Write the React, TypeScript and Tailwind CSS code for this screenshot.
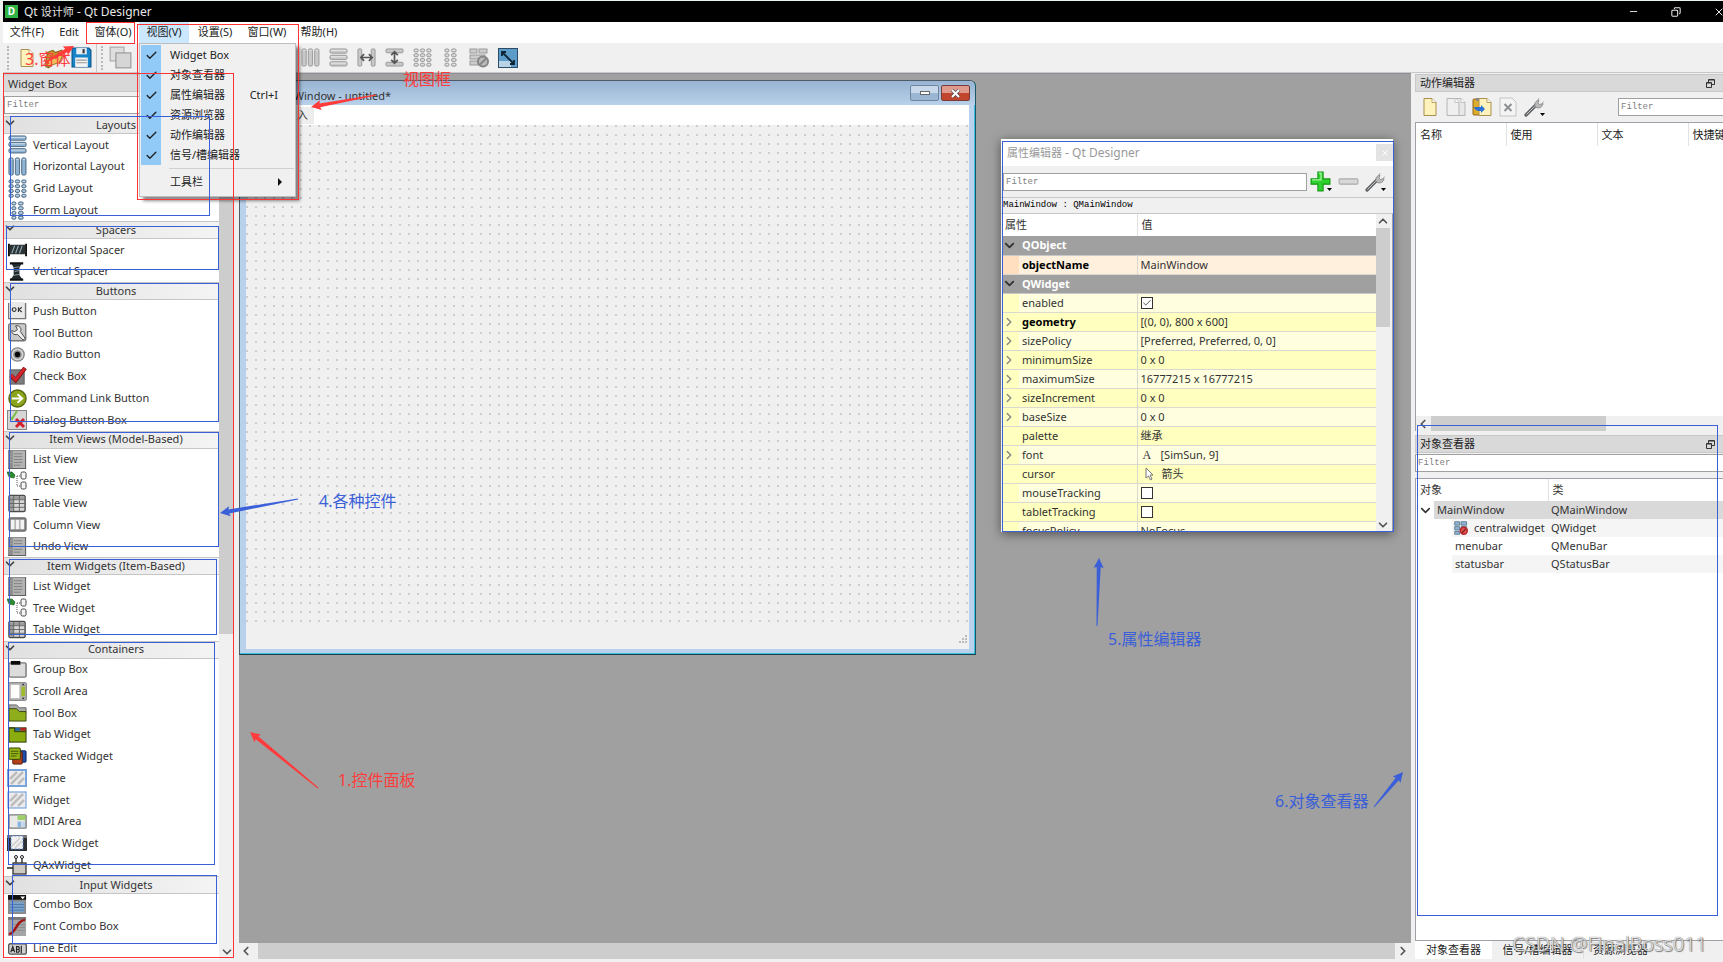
import { useState, type CSSProperties, type ReactNode } from "react";
import { Check, ChevronDown, ChevronLeft, ChevronRight, ChevronUp, Copy, Minus, X } from "lucide-react";

const metal = "#8d8f91";
const blueFill = "#8fb3d1";
const blueLine = "#47657f";

/* Small drawings */

function Svg({ size = 19, children }: { size?: number; children: ReactNode }) {
  return (
    <svg width={size} height={size} viewBox="0 0 20 20" className="shrink-0" aria-hidden="true">
      {children}
    </svg>
  );
}

function Bars({ cells, fill, line, size }: { cells: number[][]; fill: string; line: string; size?: number }) {
  return (
    <Svg size={size}>
      {cells.map(([x, y, w, h]) => (
        <g key={`${x}-${y}`}>
          <rect x={x} y={y} width={w} height={h} rx="1.5" fill={fill} stroke={line} strokeWidth="1" />
          <path d={`M${x + 1} ${y + 1.5}h${w - 2}`} stroke="#fff" strokeOpacity=".6" />
        </g>
      ))}
    </Svg>
  );
}

const rowsCells = [[1, 1, 18, 4.5], [1, 7.7, 18, 4.5], [1, 14.4, 18, 4.5]];
const colsCells = [[1, 1, 4.5, 18], [7.7, 1, 4.5, 18], [14.4, 1, 4.5, 18]];
const gridCells = [1, 6, 11, 16].flatMap((y) => [1, 7.7, 14.4].map((x) => [x, y, 4.6, 3.2]));
const formCells = [1, 6, 11, 16].flatMap((y) => [[4, y, 4.4, 3.2], [11, y, 5, 3.2]]);

function Page({ x = 4, fill = "#fff3bd", line = "#a98f4c" }: { x?: number; fill?: string; line?: string }) {
  return (
    <g>
      <path d={`M${x} 1.5h8l4 4v13h-12z`} fill={fill} stroke={line} />
      <path d={`M${x + 8} 1.5v4h4`} fill="#fff" stroke={line} strokeWidth=".8" />
    </g>
  );
}

function Wrench() {
  return (
    <Svg size={20}>
      <path d="M2 18L12 8" stroke="#5f6264" strokeWidth="3.2" strokeLinecap="round" />
      <path d="M2.5 17.5L12 8" stroke="#c8cbcd" strokeWidth="1" />
      <path d="M11 9.5c-1-3 1-6 4-6.500l-1 3 1.500 1.500 3.500-1c0 3-3 5-6 4.300z" fill="#b8babb" stroke="#777" strokeWidth=".7" />
      <path d="M14 3l1-2M18.500 6l1-1.500" stroke="#aaa" />
    </Svg>
  );
}

function DropMark() {
  return (
    <svg width="5" height="4" viewBox="0 0 5 4" className="-ml-1" aria-hidden="true">
      <path d="M0 0h5L2.500 3z" />
    </svg>
  );
}

function ListDrawing() {
  return (
    <Svg>
      <rect x="0" y="0" width="19" height="20" fill="#8b8b8b" />
      <rect x="5" y="1" width="13" height="18" fill="#b3b3b3" />
      <path d="M6 4h9M6 7h9M6 10h9M6 13h9M6 16h7" stroke="#808080" />
      <path d="M2 4h2M2 7h2M2 10h2M2 13h2" stroke="#a8a8a8" />
      <path d="M18.500 0v20M0 19.500h19" stroke="#5e5e5e" />
    </Svg>
  );
}

function TreeDrawing() {
  return (
    <Svg size={20}>
      <path d="M0 1l5 0 3 3-1 3-5-1z" fill="#2c8a32" stroke="#145f1a" strokeWidth=".6" />
      <path d="M10 5h3M10 5v10h3" stroke="#555" fill="none" strokeDasharray="1 1" />
      <rect x="14" y="1" width="5" height="7" rx="1.500" fill="#f4f4f4" stroke="#444" />
      <rect x="14" y="11" width="5" height="7" rx="1.500" fill="#f4f4f4" stroke="#444" />
    </Svg>
  );
}

function TableDrawing() {
  return (
    <Svg>
      <rect x="1" y="1.500" width="17" height="17" rx="1.500" fill="#d8d8d8" stroke="#4b4b4b" strokeWidth="1.500" />
      <path d="M2 2.500h15v3h-15zM2 5h4v13h-4z" fill="#9c9c9c" />
      <path d="M1 6h17M1 10h17M1 14h17M6 2v16M12 2v16" stroke="#666" />
    </Svg>
  );
}

function Hatched({ frame }: { frame?: boolean }) {
  return (
    <Svg size={20}>
      <rect x="1" y="2" width="18" height="16" fill="#ececec" stroke="#78a5dc" strokeWidth={frame ? 2 : 1.200} />
      <path d="M3 11l7-7M4 16L16 4M11 16l6-6" stroke="#bdbdbd" strokeWidth="2.500" />
    </Svg>
  );
}

const drawings: Record<string, ReactNode> = {
  vertical: <Bars cells={rowsCells} fill={blueFill} line={blueLine} />,
  horizontal: <Bars cells={colsCells} fill={blueFill} line={blueLine} />,
  grid: <Bars cells={gridCells} fill={blueFill} line={blueLine} />,
  form: <Bars cells={formCells} fill={blueFill} line={blueLine} />,
  hspacer: (
    <Svg>
      <path d="M2 5h16v10H2z" fill="#2c3336" />
      <path d="M1 4v13M19 4v13" stroke="#111" strokeWidth="2" />
      <path d="M4 14l3-8M8 14l3-8M12 14l3-8" stroke="#8fa9b2" strokeWidth="1.200" />
    </Svg>
  ),
  vspacer: (
    <Svg>
      <path d="M2 1.500h14M2 18.500h14" stroke="#111" strokeWidth="2.500" />
      <path d="M4 2h10l-2 4v8l3 4H3l3-4V6z" fill="#22292c" />
      <path d="M6 6l6-1M7 10l5-1M6 14l6-1" stroke="#8aa1a8" />
    </Svg>
  ),
  push: (
    <Svg>
      <rect x=".5" y="0" width="18" height="18" rx="2" fill="#e9e9e9" />
      <path d="M.5 1v16.500h18V1" fill="none" stroke="#777" strokeWidth="1.500" />
      <circle cx="6.500" cy="8" r="2" fill="none" stroke="#333" strokeWidth="1.200" />
      <path d="M11 5.500v5M14.500 5.500L11.500 8l3 2.500" fill="none" stroke="#333" strokeWidth="1.200" />
    </Svg>
  ),
  tool: (
    <Svg>
      <rect x=".7" y=".7" width="18" height="18" rx="2" fill="#c9c9c9" stroke="#777" strokeWidth="1.400" />
      <path d="M8 3c4-1 7 3 5 6l5 7-2 2-6-6c-4 1-6-1-6-4l3 1 3-2z" fill="#f2f2f2" stroke="#444" />
    </Svg>
  ),
  radio: (
    <Svg>
      <circle cx="10" cy="10" r="7" fill="#d8d8d8" stroke="#888" strokeWidth="1.500" />
      <circle cx="10" cy="10" r="4.500" fill="#8b8b8b" />
      <circle cx="10" cy="10" r="2.800" fill="#080808" />
    </Svg>
  ),
  check: (
    <Svg>
      <rect x="2" y="3" width="15" height="15" fill="#7e7e7e" stroke="#5a5a5a" />
      <path d="M3 9l5 5L18 1" fill="none" stroke="#7e1414" strokeWidth="4.500" />
      <path d="M3 8.500l5 5L17.500 1.500" fill="none" stroke="#d8232a" strokeWidth="3" />
    </Svg>
  ),
  command: (
    <Svg>
      <circle cx="10" cy="10" r="9" fill="#8aa51b" stroke="#56680d" strokeWidth="1.500" />
      <path d="M4 10h10M10 5.500l5 4.500-5 4.500" fill="none" stroke="#fff" strokeWidth="2" />
    </Svg>
  ),
  dialog: (
    <Svg size={20}>
      <rect x=".5" y=".5" width="19" height="19" fill="#d6d6d6" stroke="#858585" />
      <path d="M3 7l2 2 5-8" fill="none" stroke="#78c043" strokeWidth="2" />
      <path d="M9 9l8 8M17 9l-8 8" stroke="#d3202a" strokeWidth="3" />
    </Svg>
  ),
  list: <ListDrawing />,
  tree: <TreeDrawing />,
  table: <TableDrawing />,
  column: (
    <Svg>
      <rect x="1" y="3" width="18" height="14" rx="1.500" fill="#888" stroke="#555" />
      <path d="M3 5h4v10H3zM8 5h4v10H8zM13 5h4v10h-4z" fill="#f3f3f3" />
    </Svg>
  ),
  group: (
    <Svg>
      <rect x="1" y="3" width="18" height="15" rx="1.500" fill="#dcdcdc" stroke="#777" strokeWidth="1.500" />
      <rect x="3" y="1" width="10" height="4" fill="#0b0b0b" />
    </Svg>
  ),
  scroll: (
    <Svg>
      <rect x=".7" y=".7" width="18.600" height="18.600" rx="1" fill="#b5b5b5" stroke="#777" />
      <rect x="3" y="3" width="9" height="14" fill="#fff" />
      <rect x="14" y="5" width="4" height="10" fill="#9dbb2b" />
      <path d="M14.500 3.500l1.500-2 1.500 2zM14.500 16.500l1.500 2 1.500-2z" fill="#222" />
    </Svg>
  ),
  toolbox: (
    <Svg>
      <path d="M1 2h8l3 3h7v5H1z" fill="#aaa" stroke="#666" />
      <path d="M1 6h8l3 3h7v10H1z" fill="#8fae1b" stroke="#3a4710" />
    </Svg>
  ),
  tab: (
    <Svg>
      <rect x="1" y="3" width="18" height="15" fill="#8aac0f" stroke="#29330a" />
      <path d="M7 3h6v3H7z" fill="#2563a8" />
      <path d="M13 3h6v3h-6z" fill="#b02323" />
      <path d="M1 3h6v4h12" fill="none" stroke="#29330a" />
    </Svg>
  ),
  stacked: (
    <Svg>
      <rect x="9" y="4" width="10" height="12" rx="1" fill="#1f4fae" stroke="#0d2152" />
      <rect x="5" y="5" width="10" height="13" rx="1" fill="#b5401c" stroke="#54200f" />
      <rect x="1" y="1" width="12" height="12" rx="1" fill="#93b414" stroke="#35410b" />
      <path d="M3 4.500h8M3 7h8M3 9.500h6" stroke="#45550c" />
    </Svg>
  ),
  frame: <Hatched frame />,
  widget: <Hatched />,
  mdi: (
    <Svg>
      <rect x="1" y="3" width="18" height="14" rx="1" fill="#e9e9e9" stroke="#7a7a7a" strokeWidth="1.500" />
      <path d="M10 3.500h8.500v5H10z" fill="#9fcf6b" />
      <path d="M10 10h4v6h-4z" fill="#8cb6df" />
      <path d="M15 10h3v6h-3z" fill="#bdd6ec" />
    </Svg>
  ),
  dock: (
    <Svg size={20}>
      <rect x="0" y="2" width="20" height="16" fill="#2c2f33" />
      <path d="M0 2h20v3H0z" fill="#777" />
      <rect x="4" y="3" width="12" height="13" fill="#f0f0f0" stroke="#5e8fd1" strokeDasharray="2 1.500" />
      <path d="M5 13l8-8M8 15l7-7" stroke="#ccc" strokeWidth="1.500" />
    </Svg>
  ),
  axwidget: (
    <Svg size={20}>
      <rect x="6" y="8" width="13" height="11" fill="#cdc9c2" stroke="#333" strokeWidth="1.300" />
      <path d="M9 8V3M15 8V3M0 13h6" stroke="#222" strokeWidth="1.300" />
      <circle cx="9" cy="2" r="1.500" fill="#fff" stroke="#222" />
      <circle cx="15" cy="2" r="1.500" fill="#fff" stroke="#222" />
    </Svg>
  ),
  combo: (
    <Svg>
      <rect x="0" y="0" width="19" height="20" fill="#8b8b8b" />
      <path d="M0 0h19v5H0z" fill="#111" />
      <path d="M13 1.500h5l-2.500 3z" fill="#fff" />
      <path d="M2 7h15v11H2z" fill="#7ba0c6" />
      <path d="M2 10h15M2 13h15M2 16h15" stroke="#4f7cad" />
    </Svg>
  ),
  fontcombo: (
    <Svg>
      <rect x="0" y="0" width="19" height="20" fill="#a4a4a4" />
      <path d="M0 0h19v3H0z" fill="#777" />
      <path d="M6 8h12M6 11h12M6 14h12" stroke="#8c8c8c" />
      <path d="M1 18c8-1 7-14 17-15" fill="none" stroke="#a31515" strokeWidth="2.500" />
    </Svg>
  ),
  line: (
    <Svg>
      <rect x=".7" y="5" width="18.600" height="11" rx="2" fill="#cfcfcf" stroke="#555" strokeWidth="1.400" />
      <path d="M3 14l2-6 2 6M4 12h2M9 14V8h2l1 1.500-1 1.500H9h2.500l.5 1.500-1 1.500zM14 7v8" fill="none" stroke="#222" strokeWidth="1.200" />
    </Svg>
  ),
};

const widgetGroups: { title: string; items: [string, string][] }[] = [
  {
    title: "Layouts",
    items: [
      ["vertical", "Vertical Layout"],
      ["horizontal", "Horizontal Layout"],
      ["grid", "Grid Layout"],
      ["form", "Form Layout"],
    ],
  },
  {
    title: "Spacers",
    items: [
      ["hspacer", "Horizontal Spacer"],
      ["vspacer", "Vertical Spacer"],
    ],
  },
  {
    title: "Buttons",
    items: [
      ["push", "Push Button"],
      ["tool", "Tool Button"],
      ["radio", "Radio Button"],
      ["check", "Check Box"],
      ["command", "Command Link Button"],
      ["dialog", "Dialog Button Box"],
    ],
  },
  {
    title: "Item Views (Model-Based)",
    items: [
      ["list", "List View"],
      ["tree", "Tree View"],
      ["table", "Table View"],
      ["column", "Column View"],
      ["list", "Undo View"],
    ],
  },
  {
    title: "Item Widgets (Item-Based)",
    items: [
      ["list", "List Widget"],
      ["tree", "Tree Widget"],
      ["table", "Table Widget"],
    ],
  },
  {
    title: "Containers",
    items: [
      ["group", "Group Box"],
      ["scroll", "Scroll Area"],
      ["toolbox", "Tool Box"],
      ["tab", "Tab Widget"],
      ["stacked", "Stacked Widget"],
      ["frame", "Frame"],
      ["widget", "Widget"],
      ["mdi", "MDI Area"],
      ["dock", "Dock Widget"],
      ["axwidget", "QAxWidget"],
    ],
  },
  {
    title: "Input Widgets",
    items: [
      ["combo", "Combo Box"],
      ["fontcombo", "Font Combo Box"],
      ["line", "Line Edit"],
    ],
  },
];

function Filter({ className, label }: { className: string; label: string }) {
  return (
    <input
      type="text"
      placeholder="Filter"
      aria-label={label}
      className={`border border-[#a0a0a0] bg-white px-0.5 font-['Liberation_Mono',monospace] text-[9px] text-black outline-none placeholder:text-[#808080] ${className}`}
    />
  );
}

function TitleBar() {
  return (
    <header className="flex h-[21px] shrink-0 items-center bg-black pl-0.5 text-xs text-[#e8e8e8]">
      <span className="flex size-[13px] items-center justify-center bg-[#2fb344] text-[10px] font-bold text-white">D</span>
      <h1 className="ml-1.5 flex-1">
        Qt <span className="text-[11px]">设计师</span> - Qt Designer
      </h1>
      <div className="flex items-center gap-8">
        <button aria-label="Minimize"><Minus size={11} strokeWidth={2} /></button>
        <button aria-label="Restore"><Copy size={10} strokeWidth={2.5} className="-scale-x-100" /></button>
        <button aria-label="Close" className="-mr-0.5"><X size={12} strokeWidth={2} /></button>
      </div>
    </header>
  );
}

const viewItems = ["Widget Box", "对象查看器", "属性编辑器", "资源浏览器", "动作编辑器", "信号/槽编辑器"];

function ViewMenu() {
  return (
    <div className="absolute top-full left-0 z-30 w-[157px] border border-[#bdbdbd] bg-[#f0f0f0] p-px pb-1 text-[#222] shadow-[4px_4px_3px_rgba(0,0,0,0.45)]">
      <ul>
        {viewItems.map((item) => (
          <li key={item}>
            <button className="flex h-5 w-full items-center text-left text-[11px] whitespace-nowrap">
              <span className="flex h-5 w-5 shrink-0 items-center justify-center bg-[#91c9f7]">
                <Check size={13} strokeWidth={2.5} />
              </span>
              <span className="ml-[9px]">{item}</span>
              {item === "属性编辑器" && <span className="ml-auto pr-4">Ctrl+I</span>}
            </button>
          </li>
        ))}
      </ul>
      <hr className="mt-[3px] mb-[3px] ml-7 border-[#d0d0d0]" />
      <button className="flex h-5 w-full items-center pr-3 pl-[29px] text-[11px]">
        <span className="flex-1 text-left">工具栏</span>
        <svg width="4" height="8" viewBox="0 0 4 8"><path d="M0 0l4 4-4 4z" fill="#111" /></svg>
      </button>
    </div>
  );
}

function MenuBar() {
  const [viewOpen, setViewOpen] = useState(true);
  return (
    <nav className="flex h-[21px] shrink-0 bg-white text-[11px] whitespace-nowrap text-[#222]">
      <button className="w-12 text-center">文件(F)</button>
      <button className="w-9 text-center">Edit</button>
      <button className="w-[52px] text-center">窗体(O)</button>
      <div className="relative">
        <button
          className={`h-full w-[50px] text-center ${viewOpen ? "bg-[#cce8ff]" : ""}`}
          onClick={() => setViewOpen(!viewOpen)}
        >
          视图(V)
        </button>
        {viewOpen && <ViewMenu />}
      </div>
      <button className="w-[52px] text-center">设置(S)</button>
      <button className="w-[52px] text-center">窗口(W)</button>
      <button className="w-[52px] text-center">帮助(H)</button>
    </nav>
  );
}

function Grip() {
  return <span className="h-6 border-l-2 border-dotted border-[#b8b8b8]" />;
}

function ToolBar() {
  const gray = { fill: "#c8c8c8", line: "#999999", size: 19 };
  return (
    <div className="flex h-[30px] shrink-0 items-center border-b border-[#c8c8c8] bg-[#f0f0f0] pl-1">
      <Grip />
      <button aria-label="New" className="ml-2"><Svg size={20}><Page x={4} /></Svg></button>
      <button aria-label="Open" className="ml-1.5">
        <Svg size={22}>
          <path d="M2 17L4 5l5-2 2 2 6-2v6L5 19z" fill="#c9962e" stroke="#8d671c" />
          <path d="M3 18L7 9l12-4-4 9z" fill="#eebf5c" stroke="#a57824" />
        </Svg>
      </button>
      <button aria-label="Save" className="ml-1.5">
        <Svg size={21}>
          <path d="M1 1h16l2 2v16H1z" fill="#1684c8" stroke="#0a4f85" />
          <path d="M5 1h10v6H5z" fill="#e8eef3" />
          <path d="M11 2h2v4h-2z" fill="#333" />
          <path d="M4 10h12v9H4z" fill="#f3f3f3" />
          <path d="M5 12.500h10M5 15h10" stroke="#999" />
        </Svg>
      </button>
      <span className="mr-1 ml-1 h-7 border-l border-[#c8c8c8]" />
      <Grip />
      <button aria-label="Send to back" className="ml-1.5">
        <Svg size={23}>
          <rect x="1" y="1" width="12" height="12" fill="#dedede" stroke="#aaa" />
          <rect x="6" y="6" width="13" height="13" fill="#d6d6d6" stroke="#999" />
        </Svg>
      </button>
      <div className="ml-[169px] flex items-center gap-[9px]">
        <button aria-label="Lay out horizontally"><Bars cells={colsCells} {...gray} /></button>
        <button aria-label="Lay out vertically"><Bars cells={rowsCells} {...gray} /></button>
        <button aria-label="Horizontal splitter">
          <Svg>
            <rect x="1" y="1" width="4" height="18" rx="1" fill="#c8c8c8" stroke="#999" />
            <rect x="15" y="1" width="4" height="18" rx="1" fill="#c8c8c8" stroke="#999" />
            <path d="M4 10h12M7.500 6.500L4 10l3.500 3.500M12.500 6.500L16 10l-3.500 3.500" fill="none" stroke="#555" strokeWidth="1.800" />
          </Svg>
        </button>
        <button aria-label="Vertical splitter">
          <Svg>
            <rect x="1" y="1" width="18" height="4" rx="1" fill="#c8c8c8" stroke="#999" />
            <rect x="1" y="15" width="18" height="4" rx="1" fill="#c8c8c8" stroke="#999" />
            <path d="M10 4v12M6.500 7.500L10 4l3.500 3.500M6.500 12.500L10 16l3.500-3.500" fill="none" stroke="#555" strokeWidth="1.800" />
          </Svg>
        </button>
        <button aria-label="Lay out in a grid"><Bars cells={gridCells} {...gray} /></button>
        <button aria-label="Lay out in a form"><Bars cells={formCells} {...gray} /></button>
        <button aria-label="Break layout">
          <Svg size={20}>
            <rect x="1" y="1" width="7" height="4" fill="#ccc" stroke="#999" />
            <rect x="10" y="1" width="8" height="4" fill="#ccc" stroke="#999" />
            <rect x="1" y="7" width="15" height="4" fill="#ccc" stroke="#999" />
            <rect x="1" y="13" width="8" height="4" fill="#ccc" stroke="#999" />
            <circle cx="14" cy="13.500" r="5" fill="#bbb" stroke="#858585" strokeWidth="2" />
            <path d="M11 16.500l6-6" stroke="#858585" strokeWidth="2" />
          </Svg>
        </button>
        <button aria-label="Adjust size">
          <Svg size={20}>
            <rect x=".5" y=".5" width="19" height="19" fill="#5d9cc9" stroke="#2b4d68" />
            <rect x="1" y="13" width="12" height="6" fill="#b9d3e6" />
            <path d="M5 5l10 10M4 8V4h4M16 12v4h-4" fill="none" stroke="#0d2436" strokeWidth="1.800" />
          </Svg>
        </button>
      </div>
    </div>
  );
}

function WidgetBox() {
  return (
    <aside className="flex w-[231px] shrink-0 flex-col bg-[#f0f0f0]">
      <h2 className="mt-px h-[18px] border border-[#c8c8c8] bg-[#d9d9d9] pl-1 text-[11px] leading-[17px] text-[#333]">Widget Box</h2>
      <Filter className="mx-px mt-1 h-[18px]" label="Filter widgets" />
      <div className="mt-0.5 flex min-h-0 flex-1 bg-white">
        <div className="flex min-w-0 flex-1 flex-col overflow-hidden">
          {widgetGroups.map((group) => (
            <section key={group.title} className="flex basis-[18px] flex-col" style={{ flexGrow: group.items.length }}>
              <h3 className="flex h-[18px] shrink-0 items-center border-y border-[#c6c6c6] bg-linear-to-r from-[#e0e0e0] to-[#f4f4f4] text-[11px] text-[#333]">
                <ChevronDown size={14} strokeWidth={3} className="mb-1 text-[#444]" />
                <span className="flex-1 pr-1 text-center">{group.title}</span>
              </h3>
              <ul className="flex flex-1 flex-col">
                {group.items.map(([icon, name]) => (
                  <li key={name} className="flex min-h-5 flex-1 items-center gap-1.5 pl-1 text-[11px] text-[#333]">
                    <span className="flex w-5 justify-center">{drawings[icon]}</span>
                    {name}
                  </li>
                ))}
              </ul>
            </section>
          ))}
        </div>
        <div className="flex w-[15px] flex-col items-center bg-[#f0f0f0] text-[#555]">
          <span className="w-full grow-[516] bg-[#cdcdcd]" />
          <span className="grow-[310]" />
          <ChevronDown size={14} strokeWidth={3} />
        </div>
      </div>
    </aside>
  );
}

function FormWindow() {
  return (
    <section className="absolute top-[6px] left-0 flex h-[575px] w-[737px] flex-col rounded-tr-md border border-[#4f5b66] border-r-[#1b5566] border-b-[#1b3f4a] bg-[#b9d1ea] px-[6px] pb-[5px] shadow-[inset_-1px_-1px_0_#39bfe0]">
      <header className="-mx-[6px] flex h-[24px] shrink-0 items-center rounded-tr-md bg-linear-to-b from-[#98b4d2] to-[#b9d1ea] pr-[5px] text-[11px] text-[#333]">
        <h2 className="flex-1 pt-1.5 pl-7">MainWindow - untitled*</h2>
        <button aria-label="Minimize form" className="mr-0.5 flex h-4 w-[29px] items-center justify-center rounded-xs border border-[#6f84a0] bg-linear-to-b from-[#c7d8ea] from-50% to-[#9bb6d3] to-50%">
          <span className="h-1 w-2.5 border border-[#666] bg-white" />
        </button>
        <button aria-label="Close form" className="flex h-4 w-[29px] items-center justify-center rounded-xs border border-[#7a3b3b] bg-linear-to-b from-[#e09a8c] from-50% to-[#c2452d] to-50%">
          <svg width="11" height="9" viewBox="0 0 11 9">
            <path d="M2 1l7 7M9 1L2 8" stroke="#555" strokeWidth="3.500" />
            <path d="M2 1l7 7M9 1L2 8" stroke="#fff" strokeWidth="2" />
          </svg>
        </button>
      </header>
      <div className="flex h-5 shrink-0 items-center bg-white text-[11px] text-[#333]">
        <button className="h-[17px] w-[68px] bg-linear-to-r from-white to-[#ececec] pr-1.5 text-right">入</button>
      </div>
      <div className="flex-1 bg-[#f0f0f0]">
        <div className="h-[502px] bg-[radial-gradient(circle_at_1px_1px,#cdcdcd_1px,transparent_1px)] bg-size-[9px_9px]" />
        <svg className="mt-2 mr-0.5 ml-auto" width="9" height="9" viewBox="0 0 9 9">
          <path d="M7 1h2M4 4h2M7 4h2M1 7h2M4 7h2M7 7h2" stroke="#aaa" strokeWidth="1.500" />
        </svg>
      </div>
    </section>
  );
}

type Property = { name: string; value?: ReactNode; kind?: "group" | "object"; bold?: boolean; expandable?: boolean; checked?: boolean };

const properties: Property[] = [
  { name: "QObject", kind: "group" },
  { name: "objectName", value: "MainWindow", kind: "object", bold: true },
  { name: "QWidget", kind: "group" },
  { name: "enabled", checked: true },
  { name: "geometry", value: "[(0, 0), 800 x 600]", bold: true, expandable: true },
  { name: "sizePolicy", value: "[Preferred, Preferred, 0, 0]", expandable: true },
  { name: "minimumSize", value: "0 x 0", expandable: true },
  { name: "maximumSize", value: "16777215 x 16777215", expandable: true },
  { name: "sizeIncrement", value: "0 x 0", expandable: true },
  { name: "baseSize", value: "0 x 0", expandable: true },
  { name: "palette", value: "继承" },
  {
    name: "font",
    value: (
      <span className="flex items-center gap-1.5 pl-0.5">
        <span className="w-3 font-['Liberation_Serif',serif] text-xs">A</span>[SimSun, 9]
      </span>
    ),
    expandable: true,
  },
  {
    name: "cursor",
    value: (
      <span className="flex items-center gap-2 pl-1">
        <svg width="9" height="14" viewBox="0 0 9 14">
          <path d="M1 1v10l2.500-2 2 4 1.500-1-2-4H8z" fill="#fff" stroke="#777" />
        </svg>
        箭头
      </span>
    ),
  },
  { name: "mouseTracking", checked: false },
  { name: "tabletTracking", checked: false },
  { name: "focusPolicy", value: "NoFocus" },
];

function CheckCell({ name, initial }: { name: string; initial: boolean }) {
  const [checked, setChecked] = useState(initial);
  return (
    <span className="relative flex size-3">
      <input
        type="checkbox"
        aria-label={name}
        checked={checked}
        onChange={() => setChecked(!checked)}
        className="size-3 appearance-none border border-[#333] bg-white"
      />
      {checked && <Check size={10} className="pointer-events-none absolute top-px left-px" />}
    </span>
  );
}

function PropertyRow({ property, index }: { property: Property; index: number }) {
  const { name, value, kind, bold, expandable, checked } = property;

  if (kind === "group") {
    return (
      <tr className="h-[19px] border-b border-[#c8c8c8] bg-[#a0a0a0] text-white">
        <th colSpan={3} scope="colgroup" className="p-0 text-left font-bold">
          <span className="flex items-center gap-[5px]">
            <ChevronDown size={15} strokeWidth={3} className="text-[#333]" />
            {name}
          </span>
        </th>
      </tr>
    );
  }

  const dark = index % 2 === 0;
  const tone = kind === "object" ? "bg-[#fff0de]" : dark ? "bg-[#ffffbf]" : "bg-[#ffffdf]";
  return (
    <tr className={`h-[19px] border-b border-[#d9d9d0] text-[#333] ${tone}`}>
      <td className={`w-[17px] p-0 ${kind === "object" ? "bg-[#ffdfbf]" : "bg-[#ffffbf]"}`}>
        {expandable && <ChevronRight size={14} strokeWidth={2.5} className="text-[#888]" />}
      </td>
      <th scope="row" className={`w-[118px] border-r border-[#d9d9d0] p-0 pl-[3px] text-left ${bold ? "font-bold text-black" : "font-normal"}`}>
        {name}
      </th>
      <td className="p-0 pl-[3px]">{checked === undefined ? value : <CheckCell name={name} initial={checked} />}</td>
    </tr>
  );
}

function PropertyEditor() {
  return (
    <section className="absolute top-[65px] left-[762px] flex h-[393px] w-[392px] flex-col bg-[#f0f0f0] shadow-[0_2px_10px_rgba(0,0,0,0.5)]">
      <header className="flex h-[27px] shrink-0 items-center bg-white pl-1.5 text-xs text-[#999]">
        <h2 className="flex-1">
          <span className="text-[11px]">属性编辑器</span> - Qt Designer
        </h2>
        <button aria-label="Close property editor" className="flex size-[17px] items-center justify-center bg-[#e3e3e3] text-white">
          <X size={8} strokeWidth={3} />
        </button>
      </header>
      <div className="flex h-[31px] shrink-0 items-center pr-[7px] pl-0.5">
        <Filter className="h-[18px] min-w-0 flex-1" label="Filter properties" />
        <button aria-label="Add property" className="ml-[3px] flex items-end">
          <Svg size={21}>
            <path d="M7.500 1h5v6.500H19v5h-6.500V19h-5v-6.500H1v-5h6.500z" fill="#2fd12f" stroke="#119611" />
            <path d="M8.500 2h2v6.500H2" fill="none" stroke="#a5f5a0" strokeWidth="1.200" />
          </Svg>
          <DropMark />
        </button>
        <button aria-label="Remove property" className="ml-1.5">
          <Svg size={21}><rect x="1" y="7.500" width="18" height="5" rx="1" fill="#d8d8d8" stroke="#aaa" /></Svg>
        </button>
        <button aria-label="Configure" className="ml-1.5 flex items-end">
          <Wrench />
          <DropMark />
        </button>
      </div>
      <p className="h-[17px] shrink-0 border-y border-[#c8c8c8] pl-0.5 font-['Liberation_Mono',monospace] text-[9px] leading-[15px] whitespace-pre text-black">MainWindow : QMainWindow</p>
      <div className="flex min-h-0 flex-1 border-r border-[#a0a0a0] pr-0.5 pl-px">
        <div className="min-w-0 flex-1 overflow-hidden bg-white">
          <table className="w-full table-fixed border-collapse text-[11px] leading-[14px]">
            <colgroup>
              <col className="w-[17px]" />
              <col className="w-[118px]" />
              <col />
            </colgroup>
            <thead>
              <tr className="h-[22px] text-left text-[#333]">
                <th colSpan={2} className="border-r border-[#e0e0e0] p-0 pl-[3px] font-normal">属性</th>
                <th className="p-0 pl-1 font-normal">值</th>
              </tr>
            </thead>
            <tbody>
              {properties.map((property, i) => (
                <PropertyRow key={property.name} property={property} index={i} />
              ))}
            </tbody>
          </table>
        </div>
        <div className="flex w-[14px] flex-col items-center text-[#555]">
          <ChevronUp size={14} strokeWidth={3} />
          <span className="h-[99px] w-full bg-[#cdcdcd]" />
          <ChevronDown size={14} strokeWidth={3} className="mt-auto" />
        </div>
      </div>
    </section>
  );
}

function Workspace() {
  return (
    <main className="ml-[5px] flex min-w-0 flex-1 flex-col border-t border-[#8e8e96] bg-[#a0a0a0]">
      <div className="relative min-h-0 flex-1 overflow-hidden">
        <FormWindow />
        <PropertyEditor />
      </div>
      <div className="flex h-4 shrink-0 items-center bg-[#f0f0f0] text-[#555]">
        <ChevronLeft size={14} strokeWidth={3} className="mr-[5px]" />
        <span className="h-full flex-1 bg-[#cdcdcd]" />
        <ChevronRight size={14} strokeWidth={3} className="mx-px" />
      </div>
    </main>
  );
}

function DockTitle({ children }: { children: ReactNode }) {
  return (
    <div className="flex h-[18px] shrink-0 items-center border border-r-0 border-[#c8c8c8] bg-[#d9d9d9] pr-2 pl-1 text-[11px] text-[#222]">
      <h2 className="flex-1">{children}</h2>
      <button aria-label="Float">
        <svg width="9" height="9" viewBox="0 0 9 9" fill="none" stroke="#333">
          <path d="M2.500 3V.5h6v5H6" />
          <path d="M.5 3.500h5v5h-5zM.5 4h5M3 1h5" />
        </svg>
      </button>
    </div>
  );
}

function ActionEditor() {
  return (
    <section className="flex h-[358px] shrink-0 flex-col pt-px">
      <DockTitle>动作编辑器</DockTitle>
      <div className="flex h-[30px] shrink-0 items-center pl-[5px]">
        <button aria-label="New action"><Svg size={20}><Page x={4} /></Svg></button>
        <button aria-label="Copy action" className="ml-1.5">
          <Svg size={20}><Page x={7} fill="#e8e8e8" line="#b5b5b5" /><Page x={1} fill="#efefef" line="#b5b5b5" /></Svg>
        </button>
        <button aria-label="Paste action" className="ml-1.5">
          <Svg size={20}>
            <rect x="1" y="2" width="12" height="16" rx="1" fill="#e0ac2c" stroke="#8d671c" />
            <path d="M4 1h6v3H4z" fill="#888" />
            <Page x={7} />
            <path d="M2 10c1 4 4 4 7 4v2l4-4-4-4v2" fill="#2a72d4" />
          </Svg>
        </button>
        <button aria-label="Delete action" className="ml-1.5">
          <Svg size={20}>
            <path d="M2 1h12l4 4v14H2z" fill="#f4f4f4" stroke="#c4c4c4" />
            <path d="M6.500 7l7 7M13.500 7l-7 7" stroke={metal} strokeWidth="2" />
          </Svg>
        </button>
        <button aria-label="Configure actions" className="ml-1.5 flex items-end">
          <Wrench />
          <DropMark />
        </button>
        <Filter className="-mr-1 ml-auto h-[18px] w-[109px]" label="Filter actions" />
      </div>
      <div className="flex min-h-0 flex-1 flex-col border-t border-l border-[#a0a0a8] bg-white">
        <table className="w-full table-fixed text-[11px] leading-4 text-[#222]">
          <colgroup>
            <col className="w-[90px]" />
            <col className="w-[91px]" />
            <col className="w-[91px]" />
            <col />
          </colgroup>
          <thead>
            <tr className="h-[23px] text-left whitespace-nowrap">
              {["名称", "使用", "文本", "快捷键"].map((label) => (
                <th key={label} className="overflow-hidden border-r border-[#e2e2e2] p-0 pl-1 font-normal last:border-r-0">{label}</th>
              ))}
            </tr>
          </thead>
        </table>
        <div className="mt-auto flex h-[15px] items-center bg-[#f0f0f0] text-[#555]">
          <ChevronLeft size={14} strokeWidth={3} className="mr-px" />
          <span className="h-full w-[175px] bg-[#cdcdcd]" />
        </div>
      </div>
    </section>
  );
}

function ObjectInspector() {
  return (
    <section className="mt-1 flex min-h-0 flex-1 flex-col">
      <DockTitle>对象查看器</DockTitle>
      <Filter className="mt-px h-[18px] w-full shrink-0 border-r-0" label="Filter objects" />
      <div className="mt-1.5 min-h-0 flex-1 border-t border-b border-l border-[#a0a0a8] bg-white">
        <table className="w-full table-fixed border-collapse text-[11px] leading-[18px] text-[#333]">
          <colgroup>
            <col className="w-[132px]" />
            <col />
          </colgroup>
          <thead>
            <tr className="h-[22px] text-left">
              <th className="border-r border-[#e2e2e2] p-0 pl-1 font-normal">对象</th>
              <th className="p-0 pl-1 font-normal">类</th>
            </tr>
          </thead>
          <tbody>
            <tr className="h-[18px]">
              <td className="p-0">
                <span className="flex h-[18px] items-center">
                  <ChevronDown size={15} strokeWidth={2.5} className="mr-px ml-0.5" />
                  <span className="h-full flex-1 bg-[#d9d9d9] pl-[3px]">MainWindow</span>
                </span>
              </td>
              <td className="bg-[#d9d9d9] p-0 pl-[3px]">QMainWindow</td>
            </tr>
            <tr className="h-[18px]">
              <td className="p-0 pl-9">
                <span className="flex h-[18px] items-center gap-1.5 bg-[#f5f5f5] pl-0.5">
                  <Svg size={14}>
                    <path d="M1 1h7v5H1zM10 1h8v5h-8zM1 8h7v5H1zM1 15h7v4H1zM10 8h8v5h-8z" fill="#8fb3d1" stroke="#47657f" />
                    <circle cx="14" cy="14" r="5" fill="#d55" stroke="#b22" strokeWidth="2" />
                    <path d="M11 17l6-6" stroke="#822" strokeWidth="2" />
                  </Svg>
                  centralwidget
                </span>
              </td>
              <td className="bg-[#f5f5f5] p-0 pl-[3px]">QWidget</td>
            </tr>
            <tr className="h-[18px]">
              <td className="p-0 pl-[39px]">menubar</td>
              <td className="p-0 pl-[3px]">QMenuBar</td>
            </tr>
            <tr className="h-[18px]">
              <td className="p-0 pl-9">
                <span className="block h-[18px] bg-[#f5f5f5] pl-[3px]">statusbar</span>
              </td>
              <td className="bg-[#f5f5f5] p-0 pl-[3px]">QStatusBar</td>
            </tr>
          </tbody>
        </table>
      </div>
      <div className="flex h-[18px] shrink-0 text-[11px] text-[#222]">
        <button className="w-[77px] bg-white">对象查看器</button>
        <button className="w-[92px] border-r border-[#e2e2e2]">信号/槽编辑器</button>
        <button className="w-[73px]">资源浏览器</button>
      </div>
    </section>
  );
}

/* Callouts drawn over the window */

type Ink = "red" | "blue";

function Box({ ink, x, y, w, h }: { ink: Ink; x: number; y: number; w: number; h: number }) {
  const place: CSSProperties = { left: x, top: y, width: w, height: h };
  return <div className={`absolute border ${ink === "red" ? "border-[#ff3333]" : "border-[#3a5fd9]"}`} style={place} />;
}

function Note({ ink, x, y, children }: { ink: Ink; x: number; y: number; children: ReactNode }) {
  return (
    <p
      className={`absolute text-base leading-5 whitespace-nowrap ${ink === "red" ? "text-[#ff3b3b]" : "text-[#3a5fd9]"}`}
      style={{ left: x, top: y }}
    >
      {children}
    </p>
  );
}

function Arrow({ ink, from, to }: { ink: Ink; from: [number, number]; to: [number, number] }) {
  const length = Math.hypot(to[0] - from[0], to[1] - from[1]);
  const angle = (Math.atan2(to[1] - from[1], to[0] - from[0]) * 180) / Math.PI;
  return (
    <path
      d={`M0 -.5L${length - 9} -2l-1 -3L${length} 0l-10 5l1 -3L0 .5z`}
      transform={`translate(${from[0]} ${from[1]}) rotate(${angle})`}
      fill={ink === "red" ? "#ff3b3b" : "#3a5fd9"}
    />
  );
}

function Callouts() {
  return (
    <div className="pointer-events-none absolute inset-x-0 -top-px bottom-0 z-40 overflow-hidden">
      <Box ink="red" x={86} y={22} w={49} h={22} />
      <Box ink="red" x={137} y={24} w={162} h={176} />
      <Box ink="red" x={3} y={73} w={231} h={885} />
      <Box ink="blue" x={10} y={116} w={200} h={100} />
      <Box ink="blue" x={6} y={226} w={213} h={44} />
      <Box ink="blue" x={10} y={283} w={209} h={139} />
      <Box ink="blue" x={9} y={432} w={210} h={115} />
      <Box ink="blue" x={9} y={559} w={208} h={76} />
      <Box ink="blue" x={8} y={642} w={207} h={223} />
      <Box ink="blue" x={12} y={875} w={205} h={69} />
      <Box ink="blue" x={1002} y={141} w={392} h={391} />
      <Box ink="blue" x={1417} y={425} w={301} h={491} />
      <svg className="absolute inset-0 size-full">
        <Arrow ink="red" from={[46, 62]} to={[74, 46]} />
        <Arrow ink="red" from={[376, 95]} to={[311, 107]} />
        <Arrow ink="red" from={[318, 788]} to={[250, 732]} />
        <Arrow ink="blue" from={[298, 499]} to={[220, 513]} />
        <Arrow ink="blue" from={[1097, 626]} to={[1099, 558]} />
        <Arrow ink="blue" from={[1374, 807]} to={[1403, 772]} />
      </svg>
      <Note ink="red" x={25} y={49}>3.窗体</Note>
      <Note ink="red" x={403} y={69}>视图框</Note>
      <Note ink="red" x={338} y={770}>1.控件面板</Note>
      <Note ink="blue" x={319} y={491}>4.各种控件</Note>
      <Note ink="blue" x={1108} y={629}>5.属性编辑器</Note>
      <Note ink="blue" x={1275} y={791}>6.对象查看器</Note>
      <p className="absolute right-4 bottom-1.5 text-xl leading-6 font-light text-[#e4e4e4] [text-shadow:0_0_1px_#555,1px_1px_1px_#777]">
        CSDN @FinalBoss011
      </p>
    </div>
  );
}

export default function App() {
  return (
    <div className="relative flex h-screen w-full flex-col overflow-hidden border-t border-[#e8f4f0] bg-[#f0f0f0] pb-[3px] pl-[3px] font-['Noto_Sans','Noto_Sans_CJK_SC',sans-serif]">
      <TitleBar />
      <MenuBar />
      <ToolBar />
      <div className="flex min-h-0 flex-1">
        <WidgetBox />
        <Workspace />
        <aside className="ml-1 flex w-[308px] shrink-0 flex-col overflow-hidden">
          <ActionEditor />
          <ObjectInspector />
        </aside>
      </div>
      <Callouts />
    </div>
  );
}
